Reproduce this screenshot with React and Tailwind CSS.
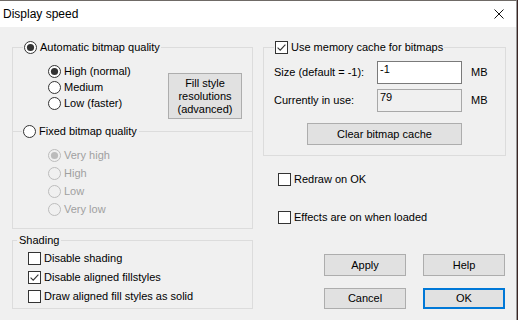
import React from "react";

function Radio({ checked = false, disabled = false, label }) {
  const stroke = disabled ? "#bcbcbc" : "#333333";
  const fill = disabled ? "#f0f0f0" : "#ffffff";
  const dot = disabled ? "#bcbcbc" : "#333333";
  return (
    <div className={"flex items-center gap-[3px] " + (disabled ? "text-[#a0a0a0]" : "text-black")}>
      <svg width="13" height="13" viewBox="0 0 13 13" className="shrink-0">
        <circle cx="6.5" cy="6.5" r="6" fill={fill} stroke={stroke} strokeWidth="1" />
        {checked && <circle cx="6.5" cy="6.5" r="3.6" fill={dot} />}
      </svg>
      <span className="whitespace-nowrap">{label}</span>
    </div>
  );
}

function Check({ checked = false, label }) {
  return (
    <div className="flex items-center gap-[3px] text-black">
      <svg width="13" height="13" viewBox="0 0 13 13" className="shrink-0">
        <rect x="0.5" y="0.5" width="12" height="12" fill="#ffffff" stroke="#333333" strokeWidth="1" />
        {checked && (
          <path d="M2.6 6.6 L5.2 9.2 L10.4 3.6" fill="none" stroke="#333333" strokeWidth="1.1" />
        )}
      </svg>
      <span className="whitespace-nowrap">{label}</span>
    </div>
  );
}

function Btn({ children, className = "", primary = false }) {
  return (
    <div
      className={
        "flex items-center justify-center bg-[#e1e1e1] text-black " +
        (primary ? "border-2 border-[#0078d7] " : "border border-[#adadad] ") +
        className
      }
    >
      {children}
    </div>
  );
}

export default function App() {
  return (
    <div className="flex w-[518px] h-[320px] bg-[#3b2624] font-['Liberation_Sans',Arial,sans-serif] text-[11px] leading-[13px] overflow-hidden">
      <div className="flex flex-col w-[517px] h-[320px] border-t border-t-[#6f6a66] border-r border-r-[#9a9a9a] bg-[#f0f0f0]">
        {/* Title bar */}
        <div className="flex items-center justify-between h-[26px] bg-white shrink-0">
          <span className="pl-[3px] text-[12px] leading-[14px] text-black">Display speed</span>
          <svg width="10" height="10" viewBox="0 0 10 10" className="mr-[12px]">
            <path d="M0.5 0.5 L9.5 9.5 M9.5 0.5 L0.5 9.5" stroke="#111" strokeWidth="1" fill="none" />
          </svg>
        </div>

        {/* Content */}
        <div className="flex flex-1 pl-[12px] gap-[10px]">
          {/* Left column */}
          <div className="flex flex-col w-[241px] mt-[12px]">
            <fieldset className="border border-[#dcdcdc] w-[241px]">
              <legend className="ml-[10px] px-[1px] h-[16px] flex items-center">
                <Radio checked label="Automatic bitmap quality" />
              </legend>
              <div className="flex pl-[35px] pt-[8px]">
                <div className="flex flex-col w-[120px]">
                  <div className="h-[16px] flex items-center"><Radio checked label="High (normal)" /></div>
                  <div className="h-[16px] flex items-center"><Radio label="Medium" /></div>
                  <div className="h-[16px] flex items-center"><Radio label="Low (faster)" /></div>
                </div>
                <Btn className="mt-[10px] w-[74px] h-[46px] flex-col text-center">
                  <span>Fill style</span>
                  <span>resolutions</span>
                  <span>(advanced)</span>
                </Btn>
              </div>
              <div className="flex items-center h-[16px] mt-[4px]">
                <div className="w-[9px] h-px bg-[#dcdcdc]" />
                <div className="px-[1px]"><Radio label="Fixed bitmap quality" /></div>
                <div className="flex-1 h-px bg-[#dcdcdc] ml-[1px]" />
              </div>
              <div className="flex flex-col pl-[35px] pt-[7px] pb-[10px]">
                <div className="h-[18px] flex items-center"><Radio checked disabled label="Very high" /></div>
                <div className="h-[18px] flex items-center"><Radio disabled label="High" /></div>
                <div className="h-[18px] flex items-center"><Radio disabled label="Low" /></div>
                <div className="h-[18px] flex items-center"><Radio disabled label="Very low" /></div>
              </div>
            </fieldset>

            <fieldset className="border border-[#dcdcdc] w-[241px] mt-[4px]">
              <legend className="ml-[4px] px-[2px] h-[14px] flex items-center text-black">Shading</legend>
              <div className="flex flex-col pl-[15px] pt-[2px] pb-[2px]">
                <div className="h-[19px] flex items-center"><Check label="Disable shading" /></div>
                <div className="h-[19px] flex items-center"><Check checked label="Disable aligned fillstyles" /></div>
                <div className="h-[19px] flex items-center"><Check label="Draw aligned fill styles as solid" /></div>
              </div>
            </fieldset>
          </div>

          {/* Right column */}
          <div className="flex flex-col w-[243px] mt-[12px]">
            <fieldset className="border border-[#dcdcdc] w-[243px]">
              <legend className="ml-[10px] px-[1px] h-[16px] flex items-center">
                <Check checked label="Use memory cache for bitmaps" />
              </legend>
              <div className="flex flex-col pl-[10px] pt-[6px] pb-[10px]">
                <div className="flex items-center h-[23px]">
                  <span className="w-[103px] whitespace-nowrap">Size (default = -1):</span>
                  <div className="w-[85px] h-[23px] bg-white border border-[#7a7a7a] pl-[2px] pt-[1px]">-1</div>
                  <span className="ml-[9px]">MB</span>
                </div>
                <div className="flex items-center h-[23px] mt-[5px]">
                  <span className="w-[103px] whitespace-nowrap">Currently in use:</span>
                  <div className="w-[85px] h-[23px] bg-[#f0f0f0] border border-[#a8a8a8] pl-[2px] pt-[1px]">79</div>
                  <span className="ml-[9px]">MB</span>
                </div>
                <Btn className="mt-[11px] ml-[33px] w-[155px] h-[22px]">Clear bitmap cache</Btn>
              </div>
            </fieldset>

            <div className="flex flex-col pl-[15px]">
              <div className="h-[16px] flex items-center mt-[15px]"><Check label="Redraw on OK" /></div>
              <div className="h-[16px] flex items-center mt-[22px]"><Check label="Effects are on when loaded" /></div>
            </div>

            <div className="flex flex-col pl-[61px] mt-[29px] gap-[12px]">
              <div className="flex gap-[17px]">
                <Btn className="w-[82px] h-[22px]">Apply</Btn>
                <Btn className="w-[82px] h-[22px]">Help</Btn>
              </div>
              <div className="flex gap-[17px]">
                <Btn className="w-[82px] h-[21px]">Cancel</Btn>
                <Btn primary className="w-[82px] h-[21px]">OK</Btn>
              </div>
            </div>
          </div>
        </div>
      </div>
    </div>
  );
}
